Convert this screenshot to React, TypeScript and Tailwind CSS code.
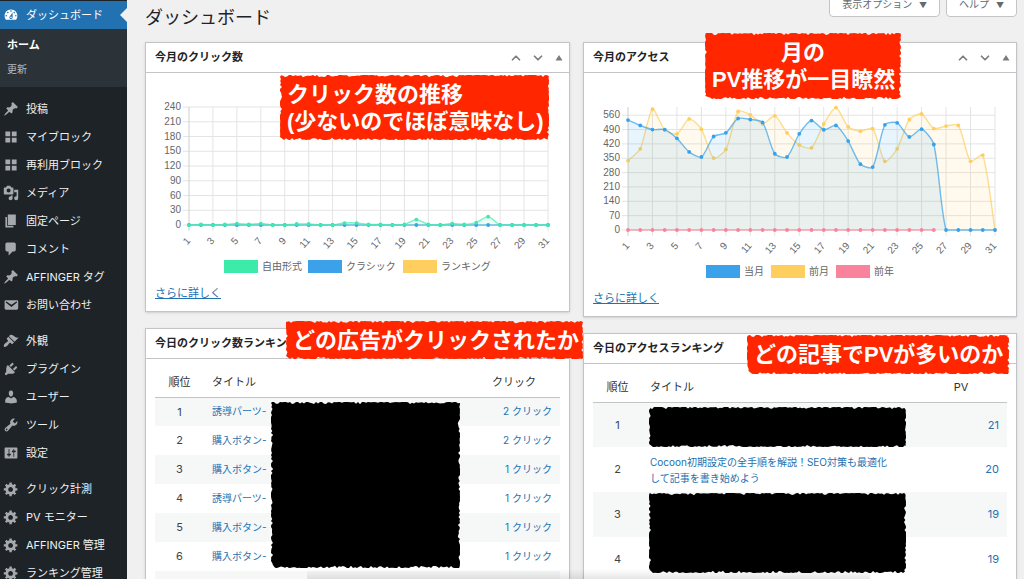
import type { ReactNode } from "react";
import { ChevronDown, ChevronUp } from "lucide-react";

const ICONS = {
  dashboard:
    "M3.76 16h12.48c1.1-1.37 1.76-3.11 1.76-5 0-4.42-3.58-8-8-8s-8 3.58-8 8c0 1.89.66 3.63 1.76 5zM10 4c.55 0 1 .45 1 1s-.45 1-1 1-1-.45-1-1 .45-1 1-1zM6 6c.55 0 1 .45 1 1s-.45 1-1 1-1-.45-1-1 .45-1 1-1zm8 0c.55 0 1 .45 1 1s-.45 1-1 1-1-.45-1-1 .45-1 1-1zm-5.37 5.55L12 7v6c0 1.1-.9 2-2 2s-2-.9-2-2c0-.57.24-1.08.63-1.45zM4 10c.55 0 1 .45 1 1s-.45 1-1 1-1-.45-1-1 .45-1 1-1zm12 0c.55 0 1 .45 1 1s-.45 1-1 1-1-.45-1-1 .45-1 1-1zm-5 3c0-.55-.45-1-1-1s-1 .45-1 1 .45 1 1 1 1-.45 1-1z",
  post: "M10.44 3.02l1.82-1.82 6.36 6.35-1.83 1.82c-1.05-.68-2.48-.57-3.41.36l-.75.75c-.92.93-1.04 2.35-.35 3.41l-1.83 1.82-2.41-2.41-2.8 2.79c-.42.42-3.38 2.71-3.8 2.29s1.86-3.39 2.28-3.81l2.79-2.79L4.1 9.36l1.83-1.82c1.05.69 2.48.57 3.4-.36l.75-.75c.93-.92 1.05-2.35.36-3.41z",
  blocks: "M9 9V3H3v6h6zm8 0V3h-6v6h6zm-8 8v-6H3v6h6zm8 0v-6h-6v6h6z",
  media:
    "M13 11V4c0-.55-.45-1-1-1h-1.67L9 1H5L3.67 3H2c-.55 0-1 .45-1 1v7c0 .55.45 1 1 1h10c.55 0 1-.45 1-1zM7 4.5c1.38 0 2.5 1.12 2.5 2.5S8.38 9.5 7 9.5 4.5 8.38 4.5 7 5.62 4.5 7 4.5zM14 6h5v10.5c0 1.38-1.12 2.5-2.5 2.5S14 17.88 14 16.5s1.12-2.5 2.5-2.5c.17 0 .34.02.5.05V9h-3V6zm-4 8.05V13h2v3.5c0 1.38-1.12 2.5-2.5 2.5S7 17.88 7 16.5 8.12 14 9.5 14c.17 0 .34.02.5.05z",
  page: "M6 15V2h10v13H6zm-1 1h8v2H3V5h2v11z",
  comments: "M5 2h9c1.1 0 2 .9 2 2v7c0 1.1-.9 2-2 2h-2l-5 5v-5H5c-1.1 0-2-.9-2-2V4c0-1.1.9-2 2-2z",
  email:
    "M3.87 4h13.25C18.37 4 19 4.59 19 5.79v8.42c0 1.19-.63 1.79-1.88 1.79H3.87c-1.25 0-1.88-.6-1.88-1.79V5.79c0-1.2.63-1.79 1.88-1.79zm6.62 8.6l6.74-5.53c.24-.2.43-.66.13-1.07-.29-.41-.82-.42-1.17-.17l-5.7 3.86L4.8 5.83c-.35-.25-.88-.24-1.17.17-.3.41-.11.87.13 1.07z",
  appearance:
    "M14.48 11.06L7.41 3.99l1.5-1.5c.5-.56 2.3-.47 3.51.32 1.21.8 1.43 1.28 2.91 2.1 1.18.64 2.45 1.26 4.45.85zm-.71.71L6.7 4.7 4.93 6.47c-.39.39-.39 1.02 0 1.41l1.06 1.06c.39.39.39 1.03 0 1.42-.6.6-1.43 1.11-2.21 1.69-.35.26-.7.53-1.01.84C1.43 14.23.4 16.08 1.4 17.07c.99 1 2.84-.03 4.18-1.36.31-.31.58-.66.85-1.02.57-.78 1.08-1.61 1.69-2.21.39-.39 1.02-.39 1.41 0l1.06 1.06c.39.39 1.02.39 1.41 0z",
  plugins:
    "M13.11 4.36L9.87 7.6 8 5.73l3.24-3.24c.35-.34 1.05-.2 1.56.32.52.51.66 1.21.31 1.55zm-8 1.77l.91-1.12 9.01 9.01-1.19.84c-.71.71-2.63 1.16-3.82 1.16H6.14L4.9 17.26c-.59.59-1.54.59-2.12 0-.59-.58-.59-1.53 0-2.12l1.24-1.24v-3.88c0-1.13.4-3.19 1.09-3.89zm7.26 3.97l3.24-3.24c.34-.35 1.04-.21 1.55.31.52.51.66 1.21.31 1.55l-3.24 3.25z",
  users:
    "M10 9.25c-2.27 0-2.73-3.44-2.73-3.44C7 4.02 7.82 2 9.97 2c2.16 0 2.98 2.02 2.71 3.81 0 0-.41 3.44-2.68 3.44zm0 2.57L12.72 10c2.39 0 4.52 2.33 4.52 4.53v2.49s-3.65 1.13-7.24 1.13c-3.65 0-7.24-1.13-7.24-1.13v-2.49c0-2.25 1.94-4.48 4.47-4.48z",
  tools:
    "M16.68 9.77c-1.34 1.34-3.3 1.67-4.95.99l-5.41 6.52c-.99.99-2.59.99-3.58 0s-.99-2.59 0-3.57l6.52-5.42c-.68-1.65-.35-3.61.99-4.95 1.28-1.28 3.12-1.62 4.72-1.06l-2.89 2.89 2.82 2.82 2.86-2.87c.53 1.58.18 3.39-1.08 4.65zM3.81 16.21c.4.39 1.04.39 1.43 0 .4-.4.4-1.04 0-1.43-.39-.4-1.03-.4-1.43 0-.39.39-.39 1.03 0 1.43z",
  settings:
    "M18 16V4c0-.55-.45-1-1-1H3c-.55 0-1 .45-1 1v12c0 .55.45 1 1 1h14c.55 0 1-.45 1-1zM8 11h1c.55 0 1 .45 1 1s-.45 1-1 1H8v1.5c0 .28-.22.5-.5.5s-.5-.22-.5-.5V13H6c-.55 0-1-.45-1-1s.45-1 1-1h1V5.5c0-.28.22-.5.5-.5s.5.22.5.5V11zm5-2h-1c-.55 0-1-.45-1-1s.45-1 1-1h1V5.5c0-.28.22-.5.5-.5s.5.22.5.5V7h1c.55 0 1 .45 1 1s-.45 1-1 1h-1v5.5c0 .28-.22.5-.5.5s-.5-.22-.5-.5V9z",
  generic:
    "M18 12h-2.18c-.17.7-.44 1.35-.81 1.93l1.54 1.54-2.1 2.1-1.54-1.54c-.58.36-1.23.63-1.91.79V19H8v-2.18c-.68-.16-1.33-.43-1.91-.79l-1.54 1.54-2.12-2.12 1.54-1.54c-.36-.58-.63-1.23-.79-1.91H1V9.03h2.17c.16-.7.44-1.35.8-1.94L2.43 5.55l2.1-2.1 1.54 1.54c.58-.37 1.24-.64 1.93-.81V2h3v2.18c.68.16 1.33.43 1.91.79l1.54-1.54 2.12 2.12-1.54 1.54c.36.59.64 1.24.8 1.94H18V12zm-8.5 1.5c1.66 0 3-1.34 3-3s-1.34-3-3-3-3 1.34-3 3 1.34 3 3 3z",
};

type IconName = keyof typeof ICONS;

const MENU: { icon: IconName; label: string }[][] = [
  [
    { icon: "post", label: "投稿" },
    { icon: "blocks", label: "マイブロック" },
    { icon: "blocks", label: "再利用ブロック" },
    { icon: "media", label: "メディア" },
    { icon: "page", label: "固定ページ" },
    { icon: "comments", label: "コメント" },
    { icon: "post", label: "AFFINGER タグ" },
    { icon: "email", label: "お問い合わせ" },
  ],
  [
    { icon: "appearance", label: "外観" },
    { icon: "plugins", label: "プラグイン" },
    { icon: "users", label: "ユーザー" },
    { icon: "tools", label: "ツール" },
    { icon: "settings", label: "設定" },
  ],
  [
    { icon: "generic", label: "クリック計測" },
    { icon: "generic", label: "PV モニター" },
    { icon: "generic", label: "AFFINGER 管理" },
    { icon: "generic", label: "ランキング管理" },
  ],
];

const ZERO = Array<number>(31).fill(0);
const FREE_CLICKS = [
  0, 1, 0, 1, 3, 1, 3, 0, 0, 2, 2, 0, 0, 4, 4, 1, 1, 0, 1, 11, 1, 0, 3, 1, 5, 17, 0, 0, 0, 0, 0,
];
const THIS_MONTH = [
  536, 510, 490, 490, 447, 381, 356, 456, 474, 544, 539, 525, 372, 356, 469, 534, 489, 510, 434,
  321, 307, 513, 523, 454, 492, 417, 0, 0, 0, 0, 0,
];
const LAST_MONTH = [
  338, 396, 589, 489, 469, 542, 492, 351, 393, 578, 562, 518, 557, 474, 415, 401, 518, 597, 503,
  482, 495, 335, 396, 539, 566, 495, 507, 510, 335, 365, 0,
];

const CLICK_ROWS = [
  { title: "誘導パーツ-", clicks: 2 },
  { title: "購入ボタン-", clicks: 2 },
  { title: "購入ボタン-", clicks: 1 },
  { title: "誘導パーツ-", clicks: 1 },
  { title: "購入ボタン-", clicks: 1 },
  { title: "購入ボタン-", clicks: 1 },
];

const PV_ROWS = [
  { title: "", pv: 21 },
  { title: "Cocoon初期設定の全手順を解説！SEO対策も最適化して記事を書き始めよう", pv: 20 },
  { title: "", pv: 19 },
  { title: "", pv: 19 },
];

function Icon({ name, className }: { name: IconName; className: string }) {
  return (
    <svg viewBox="0 0 20 20" fill="currentColor" className={className} aria-hidden="true">
      <path d={ICONS[name]} />
    </svg>
  );
}

// Bezier through the points, control points kept inside the plot
function smoothPath(pts: [number, number][], top: number, bottom: number) {
  const clamp = (y: number) => Math.min(bottom, Math.max(top, y));
  const ctrl = pts.map((p, i) => {
    const prev = pts[i - 1] ?? p;
    const next = pts[i + 1] ?? p;
    const d01 = Math.hypot(p[0] - prev[0], p[1] - prev[1]);
    const d12 = Math.hypot(next[0] - p[0], next[1] - p[1]);
    const fa = (0.25 * d01) / (d01 + d12);
    const fb = (0.25 * d12) / (d01 + d12);
    const dx = next[0] - prev[0];
    const dy = next[1] - prev[1];
    return [p[0] - fa * dx, clamp(p[1] - fa * dy), p[0] + fb * dx, clamp(p[1] + fb * dy)];
  });
  let d = `M${pts[0][0]} ${pts[0][1]}`;
  for (let i = 1; i < pts.length; i++) {
    const a = ctrl[i - 1];
    const b = ctrl[i];
    d += `C${a[2]} ${a[3]} ${b[0]} ${b[1]} ${pts[i][0]} ${pts[i][1]}`;
  }
  return d;
}

type Series = { data: number[]; color: string };

type ChartProps = {
  label: string;
  width: number;
  height: number;
  left: number;
  right: number;
  bottom: number;
  max: number;
  step: number;
  series: Series[];
  legend: { label: string; color: string; x: number }[];
  legendY: number;
};

function LineChart({ label, width, height, left, right, bottom, max, step, series, legend, legendY }: ChartProps) {
  const top = 23;
  const px = (i: number) => left + (i * (right - left)) / 30;
  const py = (v: number) => bottom - (v * (bottom - top)) / max;
  const ticks = Array.from({ length: Math.floor(max / step) + 1 }, (_, i) => i * step);
  const days = Array.from({ length: 16 }, (_, i) => i * 2);

  return (
    <svg viewBox={`0 0 ${width} ${height}`} role="img" aria-label={label} className="block h-auto w-full">
      {ticks.map((t) => (
        <line key={t} x1={left - 6} x2={right} y1={py(t)} y2={py(t)} stroke="#e4e4e4" />
      ))}
      {days.map((i) => (
        <line key={i} x1={px(i)} x2={px(i)} y1={top} y2={bottom + 6} stroke={i === 0 ? "#cfcfcf" : "#e4e4e4"} />
      ))}

      {series.map(({ data, color }) => {
        const pts = data.map((v, i): [number, number] => [px(i), py(v)]);
        const line = smoothPath(pts, top, bottom);
        return (
          <g key={color}>
            <path d={`${line}L${right} ${bottom}L${left} ${bottom}Z`} fill={color} opacity={0.11} />
            <path d={line} fill="none" stroke={color} strokeWidth={1.4} opacity={0.7} />
            {pts.map(([x, y]) => (
              <circle key={x} cx={x} cy={y} r={1.9} fill={color} />
            ))}
          </g>
        );
      })}

      <g fill="#666" fontSize={10} className="font-['Liberation_Sans','Noto_Sans_CJK_JP',sans-serif]">
        {ticks.map((t) => (
          <text key={t} x={left - 8} y={py(t) + 3} textAnchor="end">
            {t}
          </text>
        ))}
        {days.map((i) => (
          <text key={i} textAnchor="end" transform={`translate(${px(i) + 2} ${bottom + 16}) rotate(-48)`}>
            {i + 1}
          </text>
        ))}
        {legend.map((l) => (
          <g key={l.label}>
            <rect x={l.x} y={legendY} width={34} height={13} fill={l.color} />
            <text x={l.x + 38} y={legendY + 10}>
              {l.label}
            </text>
          </g>
        ))}
      </g>
    </svg>
  );
}

// Torn-paper outline: walk round the box and nudge each vertex inwards
function roughOutline(w: number, h: number) {
  const pts: string[] = [];
  let seed = w * 31 + h;
  const jitter = () => {
    seed = (seed * 1103515245 + 12345) % 2147483648;
    return (seed / 2147483648) ** 3 * 2.2;
  };
  for (let x = 1; x < w; x += 2) pts.push(`${x},${jitter()}`);
  for (let y = 1; y < h; y += 2) pts.push(`${w - jitter()},${y}`);
  for (let x = w - 1; x > 3; x -= 2) pts.push(`${x},${h - jitter()}`);
  for (let y = h - 3; y > 0; y -= 2) pts.push(`${jitter()},${y}`);
  return pts.join(" ");
}

function Rough({ w, h, color }: { w: number; h: number; color: string }) {
  return (
    <svg
      viewBox={`0 0 ${w} ${h}`}
      preserveAspectRatio="none"
      className="absolute inset-0 h-full w-full"
      aria-hidden="true"
    >
      <polygon points={roughOutline(w, h)} fill={color} />
    </svg>
  );
}

function Callout({ w, h, className, children }: { w: number; h: number; className: string; children: ReactNode }) {
  return (
    <div className={`absolute z-10 flex flex-col justify-center whitespace-nowrap px-[7px] text-[22px] font-bold leading-[27px] text-white font-['Liberation_Sans','Noto_Sans_CJK_JP',sans-serif] ${className}`}>
      <Rough w={w} h={h} color="#ff2600" />
      <p className="relative">{children}</p>
    </div>
  );
}

function Postbox({ title, overlay, children }: { title: string; overlay?: ReactNode; children: ReactNode }) {
  return (
    <section className="relative border border-[#c3c4c7] bg-white shadow-sm">
      <header className="flex h-[30px] items-center justify-between border-b border-[#c3c4c7] pl-[9px] pr-1.5">
        <h2 className="text-[11px] font-bold text-[#1d2327]">{title}</h2>
        <div className="flex items-center gap-2 text-[#787c82]">
          <button type="button" aria-label="上に移動">
            <ChevronUp size={14} strokeWidth={3} />
          </button>
          <button type="button" aria-label="下に移動">
            <ChevronDown size={14} strokeWidth={3} />
          </button>
          <button type="button" aria-label="パネルを切り替え" className="pl-0.5">
            <svg viewBox="0 0 8 8" className="size-2 fill-current">
              <path d="M4 1 7.5 6.5h-7z" />
            </svg>
          </button>
        </div>
      </header>
      <div className="px-[9px] pb-2">{children}</div>
      {overlay}
    </section>
  );
}

function MoreLink() {
  return (
    <p className="mt-2 text-[11px] leading-5">
      <a href="#" className="text-[#2271b1] underline">
        さらに詳しく
      </a>
    </p>
  );
}

function TableHead({ last }: { last: string }) {
  return (
    <thead>
      <tr className="h-[30px] border-b border-[#c3c4c7] text-[11px] text-[#2c3338]">
        <th className="w-[49px] font-normal">順位</th>
        <th className="pl-2 text-left font-normal">タイトル</th>
        <th className="w-[92px] font-normal">{last}</th>
      </tr>
    </thead>
  );
}

function Sidebar() {
  return (
    <nav className="w-[127px] shrink-0 bg-[#1d2327] pt-px text-[11px] text-[#f0f0f1]">
      <a href="#" className="relative flex h-7 items-center gap-[7px] bg-[#2271b1] pl-[3px] text-white">
        <Icon name="dashboard" className="size-4" />
        ダッシュボード
        <span className="absolute right-0 border-y-[7px] border-r-[7px] border-y-transparent border-r-[#f0f0f1]" />
      </a>
      <ul className="mb-2 bg-[#2c3338] pb-1.5 pt-1 leading-6">
        <li>
          <a href="#" className="block pl-[7px] font-bold text-white">ホーム</a>
        </li>
        <li>
          <a href="#" className="block pl-[7px] text-[10px] leading-6 text-[#b4b9be]">更新</a>
        </li>
      </ul>
      {MENU.map((group, i) => (
        <ul key={i} className="mb-2">
          {group.map((item) => (
            <li key={item.label}>
              <a href="#" className="flex h-7 items-center gap-[7px] whitespace-nowrap pl-[3px]">
                <Icon name={item.icon} className="size-4 text-[#a7aaad]" />
                {item.label}
              </a>
            </li>
          ))}
        </ul>
      ))}
    </nav>
  );
}

export default function App() {
  return (
    <div className="relative flex h-screen overflow-hidden bg-[#f0f0f1] text-[#3c434a] font-['Inter','Noto_Sans_CJK_JP',sans-serif]">
      <Sidebar />

      <main className="min-w-0 flex-1 pl-[18px] pr-[7px]">
        <div className="flex h-[42px] items-start justify-between">
          <h1 className="pt-1 text-[18px] leading-7 text-[#1d2327]">ダッシュボード</h1>
          <div className="-mt-2 flex gap-1.5 text-[10px] leading-[22px] text-[#646970]">
            <button type="button" className="rounded-b border border-[#c3c4c7] bg-white px-3">
              表示オプション <span className="pl-1 text-[8px]">▼</span>
            </button>
            <button type="button" className="rounded-b border border-[#c3c4c7] bg-white px-3">
              ヘルプ <span className="pl-1 text-[8px]">▼</span>
            </button>
          </div>
        </div>

        <div className="grid grid-cols-[425fr_434fr] items-start gap-x-[13px]">
          {/* Clicks */}
          <div className="flex flex-col gap-4">
            <Postbox
              title="今月のクリック数"
              overlay={
                <Callout w={269} h={65} className="left-[134px] top-8 h-[65px] w-[269px]">
                  クリック数の推移
                  <br />
                  (少ないのでほぼ意味なし)
                </Callout>
              }
            >
              <div className="pt-[11px]">
                <LineChart
                  label="今月のクリック数"
                  width={405}
                  height={191}
                  left={34}
                  right={393}
                  bottom={141}
                  max={240}
                  step={30}
                  series={[
                    { data: ZERO, color: "#36a2eb" },
                    { data: FREE_CLICKS, color: "#3ceba9" },
                  ]}
                  legend={[
                    { label: "自由形式", color: "#3ceba9", x: 69 },
                    { label: "クラシック", color: "#3ba2ea", x: 153 },
                    { label: "ランキング", color: "#fecf5f", x: 248 },
                  ]}
                  legendY={176}
                />
              </div>
              <MoreLink />
            </Postbox>

            <Postbox
              title="今日のクリック数ランキング"
              overlay={
                <>
                  <Callout w={297} h={38} className="left-[140px] -top-2 h-[38px] w-[297px]">
                    どの広告がクリックされたか
                  </Callout>
                  <div className="absolute left-[125px] top-[73px] h-[166px] w-[189px]">
                    <Rough w={189} h={166} color="#000" />
                  </div>
                </>
              }
            >
              <table className="mt-2 w-full table-fixed text-[11px]">
                <TableHead last="クリック" />
                <tbody>
                  {CLICK_ROWS.map((row, i) => (
                    <tr key={i} className="h-[29px] odd:bg-[#f6f7f7]">
                      <td className="text-center">{i + 1}</td>
                      <td className="pl-2 text-[10px]">
                        <a href="#" className="text-[#2271b1]">{row.title}</a>
                      </td>
                      <td className="pr-2 text-right text-[10px]">
                        <a href="#" className="text-[#2271b1]">{row.clicks} クリック</a>
                      </td>
                    </tr>
                  ))}
                  <tr className="h-[29px] odd:bg-[#f6f7f7]">
                    <td colSpan={3} />
                  </tr>
                </tbody>
              </table>
            </Postbox>
          </div>

          {/* Page views */}
          <div className="flex flex-col gap-4">
            <Postbox
              title="今月のアクセス"
              overlay={
                <Callout w={196} h={66} className="-top-2.5 left-[121px] h-[66px] w-[196px] text-center">
                  月の
                  <br />
                  PV推移が一目瞭然
                </Callout>
              }
            >
              <div className="pt-[11px]">
                <LineChart
                  label="今月のアクセス"
                  width={414}
                  height={196}
                  left={35}
                  right={402}
                  bottom={146}
                  max={600}
                  step={70}
                  series={[
                    { data: LAST_MONTH, color: "#fecf5f" },
                    { data: THIS_MONTH, color: "#36a2eb" },
                    { data: ZERO.slice(0, 26), color: "#f9839b" },
                  ]}
                  legend={[
                    { label: "当月", color: "#3ba2ea", x: 113 },
                    { label: "前月", color: "#fecf5f", x: 178 },
                    { label: "前年", color: "#f9839b", x: 243 },
                  ]}
                  legendY={181}
                />
              </div>
              <MoreLink />
            </Postbox>

            <Postbox
              title="今日のアクセスランキング"
              overlay={
                <>
                  <Callout w={262} h={39} className="left-[163px] top-px h-[39px] w-[262px]">
                    どの記事でPVが多いのか
                  </Callout>
                  <div className="absolute left-[65px] top-[73px] h-10 w-[257px]">
                    <Rough w={257} h={40} color="#000" />
                  </div>
                  <div className="absolute left-[65px] top-[159px] h-20 w-[257px]">
                    <Rough w={257} h={80} color="#000" />
                  </div>
                </>
              }
            >
              <table className="mt-2 w-full table-fixed text-[11px]">
                <TableHead last="PV" />
                <tbody>
                  {PV_ROWS.map((row, i) => (
                    <tr key={i} className="h-[45px] odd:bg-[#f6f7f7]">
                      <td className="text-center">{i + 1}</td>
                      <td className="pl-2 pr-6 text-[10px] leading-4">
                        <a href="#" className="text-[#2271b1]">{row.title}</a>
                      </td>
                      <td className="pr-2 text-right">
                        <a href="#" className="text-[#2271b1]">{row.pv}</a>
                      </td>
                    </tr>
                  ))}
                </tbody>
              </table>
            </Postbox>
          </div>
        </div>
      </main>

      <div className="pointer-events-none absolute bottom-0 left-[30%] right-[15%] h-2.5 bg-linear-to-t from-black/10 to-transparent" />
    </div>
  );
}
